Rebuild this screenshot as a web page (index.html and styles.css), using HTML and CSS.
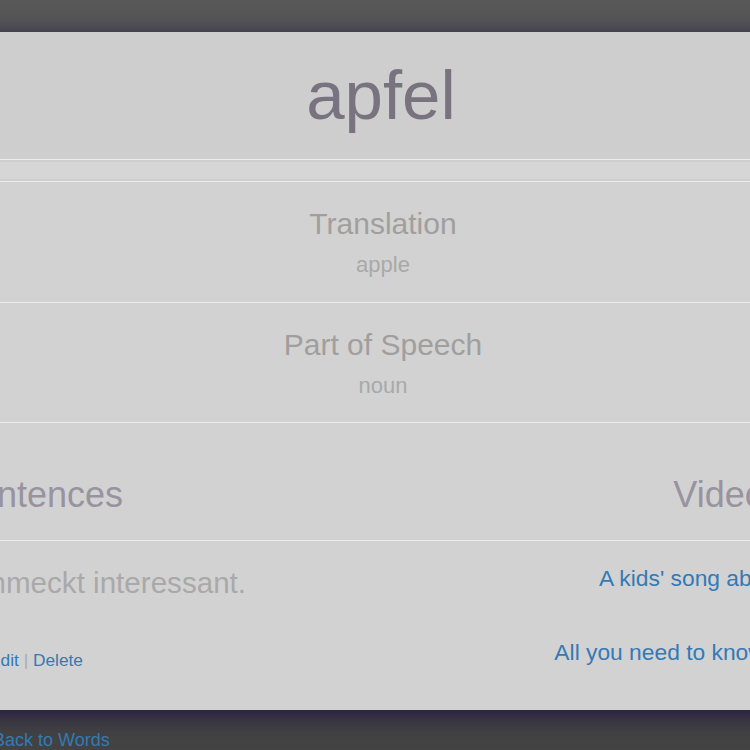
FILE: index.html
```html
<!DOCTYPE html>
<html lang="de">
<head>
<meta charset="utf-8">
<title>apfel</title>
<link rel="stylesheet" href="styles.css">
</head>
<body>
<div class="page">
  <main class="panel">
    <header class="word-head">
      <h1 class="word">apfel</h1>
    </header>
    <div class="strip"></div>
    <section class="field">
      <h3 class="field-label">Translation</h3>
      <p class="field-value">apple</p>
    </section>
    <section class="field field-last">
      <h3 class="field-label">Part of Speech</h3>
      <p class="field-value">noun</p>
    </section>
    <div class="columns">
      <div class="col">
        <h2 class="col-title">Sentences</h2>
        <div class="col-body">
          <p class="sentence">Der Apfel schmeckt interessant.</p>
          <p class="actions"><a href="#">Edit</a> <span class="sep">|</span> <a href="#">Delete</a></p>
        </div>
      </div>
      <div class="col">
        <h2 class="col-title">Videos</h2>
        <div class="col-body">
          <a class="video" href="#">A kids' song about apples</a>
          <a class="video" href="#">All you need to know about apples</a>
        </div>
      </div>
    </div>
  </main>
  <nav class="back"><a href="#">Back to Words</a></nav>
</div>
</body>
</html>
```
FILE: styles.css
```css
html, body {
  margin: 0;
  padding: 0;
  height: 750px;
  overflow: hidden;
}
html {
  background: linear-gradient(#585858, #434343);
}
body {
  font-family: "Liberation Sans", Arial, sans-serif;
  color: #a9a9a9;
}
a {
  color: #337ab7;
  text-decoration: none;
}
.page {
  width: 1380px;
  margin-left: -307px;
  padding-top: 32px;
}
.panel {
  background: #d2d2d2;
  box-shadow: 0 5px 22px rgba(28, 18, 64, 0.9);
  text-align: center;
}
.word-head {
  background: #cecece;
  padding: 30px 0 29px;
  border-bottom: 1px solid #ececec;
}
.word {
  margin: 0 4px 0 0;
  font-size: 69px;
  line-height: 68px;
  font-weight: normal;
  color: #79737f;
}
.strip {
  height: 17px;
  background: #d6d6d6;
  border-top: 2px solid #cecece;
  border-bottom: 2px solid #cecece;
}
.field {
  border-top: 1px solid #ececec;
  padding: 24px 0 21.5px;
}
.field-last {
  border-bottom: 1px solid #ececec;
}
.field-label {
  margin: 0;
  font-size: 30px;
  line-height: 36px;
  font-weight: normal;
  color: #a19e9e;
}
.field-value {
  margin: 8px 0 0;
  font-size: 22px;
  line-height: 30px;
  color: #a9a9a9;
}
.columns {
  display: grid;
  grid-template-columns: 1fr 1fr;
}
.col-title {
  margin: 0;
  padding: 52px 0 25px;
  font-size: 36px;
  line-height: 40px;
  font-weight: normal;
  color: #98939f;
  border-bottom: 1px solid #ececec;
}
.col-body {
  display: flex;
  flex-direction: column;
  align-items: center;
  padding-bottom: 38px;
}
.sentence {
  margin: 24px 0 0;
  font-size: 29.6px;
  line-height: 36px;
  color: #a9a9a9;
}
.actions {
  margin: 47px 4px 0 0;
  font-size: 17.3px;
  line-height: 24px;
}
.sep {
  color: #aaaaaa;
}
.video {
  margin-top: 22px;
  font-size: 22.8px;
  line-height: 30px;
}
.video + .video {
  margin-top: 44px;
}
.back {
  padding: 18px 0 0 300px;
  font-size: 18px;
  line-height: 24px;
}
```
